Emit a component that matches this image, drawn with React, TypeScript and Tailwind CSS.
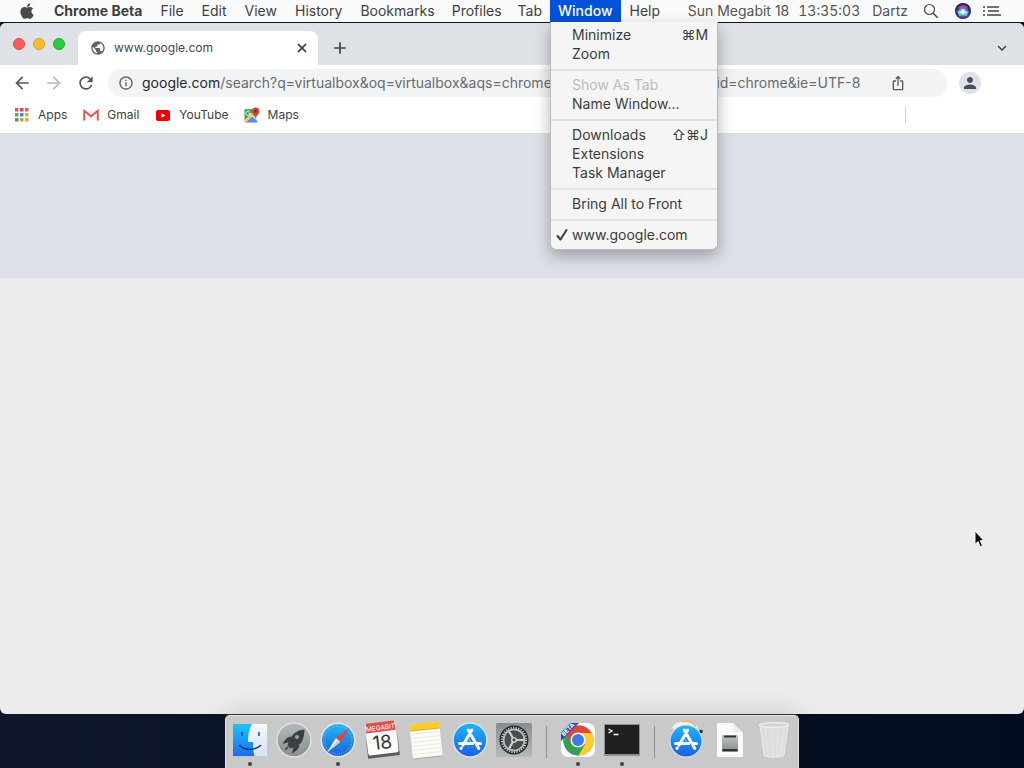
import React from "react";
import { FaApple } from "react-icons/fa";
import {
  MdAdd,
  MdArrowBack,
  MdArrowForward,
  MdExpandMore,
  MdInfoOutline,
  MdIosShare,
  MdPerson,
  MdPublic,
  MdRefresh,
} from "react-icons/md";

type Entry = { label: string; keys?: string; disabled?: boolean; checked?: boolean };

const windowMenu: Entry[][] = [
  [{ label: "Minimize", keys: "⌘M" }, { label: "Zoom" }],
  [{ label: "Show As Tab", disabled: true }, { label: "Name Window..." }],
  [{ label: "Downloads", keys: "⇧⌘J" }, { label: "Extensions" }, { label: "Task Manager" }],
  [{ label: "Bring All to Front" }],
  [{ label: "www.google.com", checked: true }],
];

const standardMenus = ["File", "Edit", "View", "History", "Bookmarks"];
const browserMenus = ["Profiles", "Tab"];

function WindowMenu() {
  return (
    <div
      role="menu"
      aria-label="Window"
      className="absolute left-0 top-full z-20 w-[168px] rounded-b-md border border-t-0 border-[#b9b9b9] bg-[#f5f5f5] py-1 shadow-[0_6px_16px_rgba(0,0,0,0.3)]"
    >
      {windowMenu.map((group, i) => (
        <div
          key={i}
          role="group"
          className={i > 0 ? "mt-[5px] border-t-2 border-[#e2e2e2] pt-[5px]" : ""}
        >
          {group.map((e) => (
            <button
              key={e.label}
              role="menuitem"
              disabled={e.disabled}
              className="flex h-[19px] w-full items-center whitespace-nowrap pb-px pr-[9px] text-left leading-[18px] text-[#3c3c3c] disabled:text-[#bcbcbc]"
            >
              <span className="flex w-[21px] justify-center">
                {e.checked && (
                  <svg viewBox="0 0 12 14" className="h-[14px] w-3" fill="none" stroke="currentColor">
                    <path d="M1.500 8 4.500 11.500 10.500 2" strokeWidth="2" strokeLinecap="round" strokeLinejoin="round" />
                  </svg>
                )}
              </span>
              <span className="flex-1">{e.label}</span>
              {e.keys && <span>{e.keys}</span>}
            </button>
          ))}
        </div>
      ))}
    </div>
  );
}

function Siri() {
  return (
    <svg viewBox="0 0 16 16" className="size-4">
      <defs>
        <radialGradient id="siri" cx="50%" cy="55%" r="55%">
          <stop offset="0" stopColor="#e8f6ff" />
          <stop offset="0.35" stopColor="#5aa6e0" />
          <stop offset="0.7" stopColor="#3a2f78" />
          <stop offset="1" stopColor="#1c1838" />
        </radialGradient>
      </defs>
      <circle cx="8" cy="8" r="8" fill="url(#siri)" />
      <path d="M2.500 5.500C5 1 11 1 13.500 5.500 11 4 9 5 8 7 6 4.500 4.500 4.500 2.500 5.500Z" fill="#c848a8" opacity=".85" />
      <path d="M1.500 9c2.500-2 4.500-1.500 6.500-3.500C10 8 12 8 14.500 9 12 9.500 13 12 11.500 13.500 10 12.500 9 11 8 10c-1 1-2 2.500-3.500 3.500C3.500 12 4 9.500 1.500 9Z" fill="#6fd0e8" opacity=".85" />
      <path d="M8 5.500 9.600 8.200 12.500 10 9.400 9.800 8 12.500 6.800 9.800 3.500 10 6.600 8z" fill="#fff" />
    </svg>
  );
}

function MenuBar() {
  return (
    <header className="relative z-10 flex h-[22px] items-stretch bg-[#fafafa] text-[14px] leading-[22px] text-[#3f3f3f]">
      <nav aria-label="Menu bar" className="flex whitespace-nowrap">
        <button aria-label="Apple" className="flex w-[45px] items-center justify-end pr-[9px] text-[#4a4a4a]">
          <FaApple className="size-[18px]" />
        </button>
        <button className="px-[9px] font-bold">Chrome Beta</button>
        {standardMenus.map((m) => (
          <button key={m} className="px-[9px]">
            {m}
          </button>
        ))}
        {browserMenus.map((m) => (
          <button key={m} className="px-2">
            {m}
          </button>
        ))}
        <div className="relative">
          <button aria-haspopup="menu" aria-expanded="true" className="bg-[#0451d9] px-2 font-medium text-white">
            Window
          </button>
          <WindowMenu />
        </div>
        <button className="px-[9px]">Help</button>
      </nav>
      <div className="ml-auto flex items-center whitespace-nowrap pr-[23px] text-[#555]">
        <span>Sun Megabit 18</span>
        <span className="ml-[9px] tabular-nums">13:35:03</span>
        <span className="ml-3">Dartz</span>
        <button aria-label="Search" className="ml-[15px]">
          <svg viewBox="0 0 16 16" className="size-4" fill="none" stroke="#4a4a4a">
            <circle cx="6.500" cy="6.500" r="5" strokeWidth="1.200" />
            <path d="m10.200 10.200 4.500 4.500" strokeWidth="1.600" />
          </svg>
        </button>
        <button aria-label="Siri" className="ml-4">
          <Siri />
        </button>
        <button aria-label="Notification center" className="ml-3">
          <svg viewBox="0 0 18 12" className="h-3 w-[18px]" fill="none" stroke="#444">
            <path d="M0 2h2M0 6h2M0 10h2M4 2h12M5 6h11M4 10h14" strokeWidth="1.700" />
          </svg>
        </button>
      </div>
    </header>
  );
}

function AppsIcon() {
  const colors = ["#c9655c", "#b9534c", "#c9655c", "#5aa36c", "#4d84d6", "#d9a93a", "#4ba061", "#cda33c", "#d9b23a"];
  return (
    <svg viewBox="0 0 14 14" className="size-[14px]">
      {colors.map((c, i) => (
        <rect key={i} x={(i % 3) * 5} y={Math.floor(i / 3) * 5} width="3.500" height="3.500" fill={c} />
      ))}
    </svg>
  );
}

function GmailIcon() {
  return (
    <svg viewBox="0 0 16 12" className="h-3 w-4">
      <path d="M1 1h14v10.500H1z" fill="#f7f4f4" />
      <path d="M1.200 11.500V1.800L8 7.300l6.800-5.500v9.700" fill="none" stroke="#d65a52" strokeWidth="1.900" />
    </svg>
  );
}

function YouTubeIcon() {
  return (
    <svg viewBox="0 0 16 11" className="h-[11px] w-4">
      <rect x="1" width="14" height="11" rx="2" fill="#f00008" />
      <path d="M6.500 3.200v4.600l4-2.300z" fill="#fff" />
    </svg>
  );
}

function MapsIcon() {
  return (
    <svg viewBox="1 0.500 14.500 14.500" className="size-4">
      <path d="M1.500 2.500H13v12H1.500z" fill="#e4e8ee" />
      <path d="M1.500 2.500h10L1.500 12.500z" fill="#3f9c55" />
      <path d="M1.500 12.500 11.500 2.500l1.500 1.500L3 14.500H1.500z" fill="#e9c552" />
      <path d="m3 14.500 5.500-5.500 4.500 4.500v1z" fill="#4e8df0" />
      <path d="M6.700 6.200A2 2 0 1 1 6 4.700M6.800 6.200H5" fill="none" stroke="#fff" strokeWidth=".9" />
      <path d="M11.500 1a3.500 3.500 0 0 0-3.500 3.500C8 7 11 8 11.500 11.500 12 8 15 7 15 4.500A3.500 3.500 0 0 0 11.500 1Z" fill="#c94a42" />
      <circle cx="11.500" cy="4.500" r="1.200" fill="#7e1f1c" />
    </svg>
  );
}

function Browser() {
  return (
    <main className="flex flex-1 flex-col overflow-hidden rounded-[6px] bg-[#ececec]">
      <div className="flex h-[42px] items-end bg-[#dee1e6]">
        <div className="flex h-full w-[78px] items-center gap-2 pl-[13px]">
          <button aria-label="Close window" className="size-3 rounded-full border border-[#e0484a] bg-[#fc5b57]" />
          <button aria-label="Minimize window" className="size-3 rounded-full border border-[#dfa023] bg-[#f7bd2e]" />
          <button aria-label="Zoom window" className="size-3 rounded-full border border-[#1aab29] bg-[#29cc3d]" />
        </div>
        <div className="flex h-[34px] w-60 items-center rounded-t-lg bg-white pl-3 pr-[9px] text-[12px] text-[#45484c]">
          <MdPublic className="size-4 text-[#5f6368]" />
          <span className="ml-2 flex-1">www.google.com</span>
          <button aria-label="Close tab" className="text-[#2f3236]">
            <svg viewBox="0 0 14 14" className="size-[14px]" fill="none" stroke="currentColor">
              <path d="m3 3 8 8M11 3l-8 8" strokeWidth="1.700" />
            </svg>
          </button>
        </div>
        <button aria-label="New tab" className="ml-3 flex h-[34px] items-center text-[#3c4043]">
          <MdAdd className="size-5" />
        </button>
        <button aria-label="Search tabs" className="ml-auto mr-[13px] flex h-[34px] items-center text-[#3c4043]">
          <MdExpandMore className="size-[18px]" />
        </button>
      </div>

      <div className="flex h-9 items-center bg-white pl-3 text-[#55585c]">
        <button aria-label="Back">
          <MdArrowBack className="size-5" />
        </button>
        <button aria-label="Forward" className="ml-3 text-[#b9bbbe]">
          <MdArrowForward className="size-5" />
        </button>
        <button aria-label="Reload" className="ml-3">
          <MdRefresh className="size-5" />
        </button>
        <div className="ml-3 flex h-7 flex-1 items-center rounded-full bg-[#f1f3f4] pl-[10px] pr-[41px] text-[14px] leading-5">
          <MdInfoOutline className="size-4 text-[#5f6368]" />
          <label htmlFor="address" className="ml-2 text-[#25282c]">
            google.com
          </label>
          <input
            id="address"
            className="min-w-0 flex-1 bg-transparent text-[#686c70] outline-none"
            defaultValue="/search?q=virtualbox&oq=virtualbox&aqs=chrome..69i57j0.4125j01&sourceid=chrome&ie=UTF-8"
          />
          <button aria-label="Share">
            <MdIosShare className="size-4" />
          </button>
        </div>
        <button
          aria-label="Profile"
          className="ml-3 mr-[43px] flex size-[22px] items-center justify-center rounded-full bg-[#dfe0e8] text-[#4a4d5c]"
        >
          <MdPerson className="size-[18px]" />
        </button>
      </div>

      <div className="flex h-[33px] items-start border-b border-[#dadce0] bg-white pl-[15px] pt-[6px] text-[12px] leading-4 text-[#3c4043]">
        <a href="#apps" className="flex items-center gap-[9px]">
          <AppsIcon />
          Apps
        </a>
        <a href="#gmail" className="ml-4 flex items-center gap-2">
          <GmailIcon />
          Gmail
        </a>
        <a href="#youtube" className="ml-4 flex items-center gap-2">
          <YouTubeIcon />
          YouTube
        </a>
        <a href="#maps" className="ml-[15px] flex items-center gap-2">
          <MapsIcon />
          Maps
        </a>
        <div className="ml-auto mr-[118px] h-4 w-px bg-[#cfd1d4]" />
      </div>

      <div className="h-36 bg-[#dde1e7]" />
    </main>
  );
}

function Finder() {
  return (
    <svg viewBox="0 0 36 36" className="size-9">
      <defs>
        <linearGradient id="fl" x1="0" y1="0" x2="0" y2="1">
          <stop offset="0" stopColor="#1cc3fa" />
          <stop offset="1" stopColor="#1a6df0" />
        </linearGradient>
        <linearGradient id="fr" x1="0" y1="0" x2="0" y2="1">
          <stop offset="0" stopColor="#f7f9fb" />
          <stop offset="1" stopColor="#d5e2f2" />
        </linearGradient>
      </defs>
      <path d="M1 2h34v32H1z" fill="url(#fr)" />
      <path d="M1 2h19c-3 5-4 11-4 18h5c-.2 5 .3 10 1.500 14H1z" fill="url(#fl)" />
      <path d="M10 10.500v3M27 10.500v3" stroke="#15365c" strokeWidth="1.400" strokeLinecap="round" />
      <path d="M7.500 23.500c6 5.300 15 5.300 21 0" fill="none" stroke="#0f2c4d" strokeWidth="1.400" strokeLinecap="round" />
    </svg>
  );
}

function Launchpad() {
  return (
    <svg viewBox="0 0 36 36" className="size-9">
      <defs>
        <linearGradient id="lp" x1="0" y1="0" x2="0" y2="1">
          <stop offset="0" stopColor="#b3baba" />
          <stop offset="1" stopColor="#878f91" />
        </linearGradient>
      </defs>
      <circle cx="18" cy="18" r="17" fill="url(#lp)" stroke="#e0e3e3" strokeWidth="1.400" />
      <path d="M28.500 7.500c-6 .3-10 3-13 7.200-3-.5-6.500 2-9 7.300l6-1.700-1 3.200 3 3 3-1-1.700 6c5.300-2.500 7.800-5.800 7.300-8.800 4.200-3 5.100-9 5.400-15.200Z" fill="#3a3f42" />
      <circle cx="21" cy="15" r="2" fill="#99a1a4" />
      <path d="M11 24.500 8 28.500l4.800-2.300z" fill="#3a3f42" />
    </svg>
  );
}

function Safari() {
  return (
    <svg viewBox="0 0 36 36" className="size-9">
      <defs>
        <linearGradient id="sf" x1="0" y1="0" x2="0" y2="1">
          <stop offset="0" stopColor="#22b6f5" />
          <stop offset="1" stopColor="#1c62d6" />
        </linearGradient>
      </defs>
      <circle cx="18" cy="18" r="17.500" fill="#e3e6e8" />
      <circle cx="18" cy="18" r="16" fill="url(#sf)" />
      <circle cx="18" cy="18" r="14" fill="none" stroke="#7cc4f4" strokeWidth="1.600" strokeDasharray=".6 1.600" />
      <path d="M30 5.500 20.200 20 16 16z" fill="#ef3e3a" />
      <path d="M7 30.500 20.200 20 16 16z" fill="#f6f8fa" />
      <path d="M7 30.500 20.200 20 18 18z" fill="#c3cdd8" />
    </svg>
  );
}

function Calendar() {
  return (
    <svg viewBox="0 0 36 36" className="size-9 overflow-visible">
      <g transform="rotate(-7 18 18)">
        <path d="M2 30.500h32v4.500H2z" fill="#5c5c5c" />
        <path d="M2 12 3 31H2zM34 12l-1 19h1z" fill="#777" />
        <rect x="3" y="1" width="30" height="31" rx="1.500" fill="#fcfcfc" />
        <path d="M4 0h28l1 9.500H3z" fill="#dd4f4e" />
        <text x="18" y="7.800" textAnchor="middle" fontSize="6.500" fill="#fff" className="font-['Inter',sans-serif]">
          MEGABIT
        </text>
        <text x="18" y="27" textAnchor="middle" fontSize="19" fill="#333" className="font-['Inter',sans-serif]">
          18
        </text>
      </g>
    </svg>
  );
}

function Notes() {
  return (
    <svg viewBox="0 0 36 38" className="h-[38px] w-9 overflow-visible">
      <g transform="rotate(-6 18 19)">
        <path d="M3 2h30v35H3z" fill="#aaa9a2" />
        <path d="M3 2h30v34H3z" fill="#fdfcf6" />
        <path d="M3 2h30v6.500H3z" fill="#f8cb28" />
        <path d="M3 8.500h30" stroke="#d8a41c" strokeWidth=".8" />
        <path d="M4 12h28M4 16h28M4 20h28M4 24h28M4 28h28M4 32h28" stroke="#e0dfd8" strokeWidth=".7" />
      </g>
    </svg>
  );
}

function AppStore({ badge = false }: { badge?: boolean }) {
  return (
    <svg viewBox="0 0 36 36" className="size-9 overflow-visible">
      <defs>
        <linearGradient id="as" x1="0" y1="0" x2="0" y2="1">
          <stop offset="0" stopColor="#1fb3f8" />
          <stop offset="1" stopColor="#1b62e4" />
        </linearGradient>
      </defs>
      {badge && (
        <g>
          <path d="M4 6C8-3 26-3 30 6L18 12z" fill="#f2f0ea" />
          <path d="M14-.3c6-1.200 11 .5 14 5" fill="none" stroke="#e9b052" strokeWidth="1.200" />
          <circle cx="33" cy="9.500" r="1.800" fill="#2b2024" />
        </g>
      )}
      <circle cx="18" cy={badge ? 19 : 18} r={badge ? 16.500 : 17.500} fill="#dfe8f0" />
      <circle cx="18" cy={badge ? 19 : 18} r={badge ? 15.500 : 16.200} fill="url(#as)" />
      <g stroke="#fff" strokeWidth="3" strokeLinecap="round" fill="none">
        <path d="M19.800 8 11 23.200M16.200 8l10.600 18.500M7.500 21.500h13M25 21.500h3.500M9.300 26l-.3.500" />
      </g>
      <path d="m16.200 15.500 3.500 6" stroke="#a8d4fb" strokeWidth=".7" />
    </svg>
  );
}

function Settings() {
  return (
    <svg viewBox="0 0 36 36" className="size-9">
      <defs>
        <linearGradient id="sp" x1="0" y1="0" x2="0" y2="1">
          <stop offset="0" stopColor="#868d90" />
          <stop offset="1" stopColor="#b5babd" />
        </linearGradient>
      </defs>
      <rect y="1" width="36" height="34" rx="1.500" fill="url(#sp)" />
      <circle cx="18" cy="18" r="14.500" fill="#242728" />
      <circle cx="18" cy="18" r="12.200" fill="none" stroke="#c5c8c8" strokeWidth="2" strokeDasharray="1.300 1.255" />
      <circle cx="18" cy="18" r="10.400" fill="none" stroke="#b9bcbc" strokeWidth="2" />
      <circle cx="18" cy="18" r="9" fill="#4a4e50" />
      <path d="M18 18h10M18 18 13 9.300M18 18l-5 8.700" stroke="#cdd0d0" strokeWidth="2.200" />
      <circle cx="18" cy="18" r="3" fill="#cdd0d0" />
      <circle cx="18" cy="18" r="1.400" fill="#36393b" />
    </svg>
  );
}

function Chrome() {
  return (
    <svg viewBox="0 0 36 36" className="size-9">
      <path d="M12 1h16a7 7 0 0 1 7 7v20a7 7 0 0 1-7 7H8a7 7 0 0 1-7-7V12z" fill="#fbfbfb" />
      <circle cx="18.500" cy="18.500" r="15" fill="#e0483e" />
      <path d="M5.500 11A15 15 0 0 0 18.500 33.500l6.500-11.300H12z" fill="#2fa353" />
      <path d="M18.500 33.500a15 15 0 0 0 13-22.500h-13L25 22.200z" fill="#fccd2f" />
      <path d="M5.500 11 12 22.200 18.500 11h13A15 15 0 0 0 5.500 11Z" fill="#e0483e" />
      <circle cx="18" cy="18" r="7.500" fill="#fff" />
      <circle cx="18" cy="18" r="6" fill="#3a7be8" />
      <path d="M10.500 1H19L1 19v-8.500z" fill="#2b52a8" />
      <text
        x="8"
        y="9.800"
        textAnchor="middle"
        fontSize="6"
        fontWeight="700"
        fill="#fff"
        transform="rotate(-45 7.600 7.600)"
        className="font-['Inter',sans-serif]"
      >
        BETA
      </text>
    </svg>
  );
}

function Terminal() {
  return (
    <svg viewBox="0 0 36 34" className="h-[34px] w-9">
      <rect width="36" height="32" y="1" rx="1" fill="#8f8f8f" />
      <rect x="1" y="2" width="34" height="29" fill="#1e2020" />
      <path d="m4.500 6 3.500 2-3.500 2M9.500 11.500h5" fill="none" stroke="#fff" strokeWidth="1.300" />
    </svg>
  );
}

function DiskImage() {
  return (
    <svg viewBox="0 0 36 36" className="size-9">
      <defs>
        <linearGradient id="di" x1="0" y1="0" x2="0" y2="1">
          <stop offset="0" stopColor="#c4c6c7" />
          <stop offset="1" stopColor="#85898b" />
        </linearGradient>
      </defs>
      <path d="M5 1h16l10 10v24H5z" fill="#fbfbfb" />
      <path d="M21 1c1 4 0 8-1 10 4-1 8-1 11 0z" fill="#ededed" />
      <rect x="10" y="13" width="16" height="17" rx="1" fill="url(#di)" />
      <path d="M12 14.500h12M10.500 28h15" stroke="#303234" strokeWidth="1.800" />
    </svg>
  );
}

function Trash() {
  return (
    <svg viewBox="0 0 36 38" className="h-[38px] w-9">
      <path d="M4 4 8 34c.5 3 19.500 3 20 0l4-30z" fill="#dcdddd" />
      <path d="m9 8 3 26M16 8l1 28M22 8l-1 28M28 8l-4 27" stroke="#e2e3e3" strokeWidth="1.600" fill="none" />
      <path d="M4 4 8 34c.5 3 19.500 3 20 0l4-30" stroke="#ebebeb" strokeWidth="1" fill="none" />
      <ellipse cx="18" cy="4" rx="14.500" ry="2.300" fill="#d2d3d3" stroke="#f0f0f0" strokeWidth="1.200" />
    </svg>
  );
}

function DockItem({ name, running, children }: { name: string; running?: boolean; children: React.ReactNode }) {
  return (
    <button aria-label={name} className="flex w-11 flex-col items-center">
      <span className="flex h-12 items-center">{children}</span>
      {running && <span className="-mt-[2px] size-1 rounded-full bg-[#444]" />}
    </button>
  );
}

function DockSeparator() {
  return (
    <div className="flex w-5 justify-center pt-[10px]">
      <div className="h-8 w-px bg-[#8e8e8e]" />
    </div>
  );
}

function Dock() {
  return (
    <footer className="flex h-[54px] justify-center">
      <div className="mt-px flex items-start rounded-t-[5px] border border-b-0 border-[#e2e2e2] bg-[#c9c9c9] px-[2px] shadow-[0_-1px_0_#333,0_0_24px_rgba(0,0,0,0.18)]">
        <DockItem name="Finder" running><Finder /></DockItem>
        <DockItem name="Launchpad"><Launchpad /></DockItem>
        <DockItem name="Safari" running><Safari /></DockItem>
        <DockItem name="Calendar"><Calendar /></DockItem>
        <DockItem name="Notes"><Notes /></DockItem>
        <DockItem name="App Store"><AppStore /></DockItem>
        <DockItem name="System Preferences"><Settings /></DockItem>
        <DockSeparator />
        <DockItem name="Chrome Beta" running><Chrome /></DockItem>
        <DockItem name="Terminal" running><Terminal /></DockItem>
        <DockSeparator />
        <DockItem name="Applications"><AppStore badge /></DockItem>
        <DockItem name="Disk image"><DiskImage /></DockItem>
        <DockItem name="Trash"><Trash /></DockItem>
      </div>
    </footer>
  );
}

export default function App() {
  return (
    <div className="relative flex min-h-screen flex-col bg-linear-to-r from-[#10172b] to-[#040c20] font-['Inter','Liberation_Sans',sans-serif]">
      <MenuBar />
      <div className="h-px bg-[#15161c]" />
      <Browser />
      <Dock />
      <svg viewBox="0 0 12 18" className="absolute left-[95%] top-[69%] z-30 h-[18px] w-3">
        <path
          d="M2 1v13.500l3-3 2.200 5.200 2.300-1-2.200-5H11z"
          fill="#000"
          stroke="#fff"
          strokeWidth="1"
        />
      </svg>
    </div>
  );
}
